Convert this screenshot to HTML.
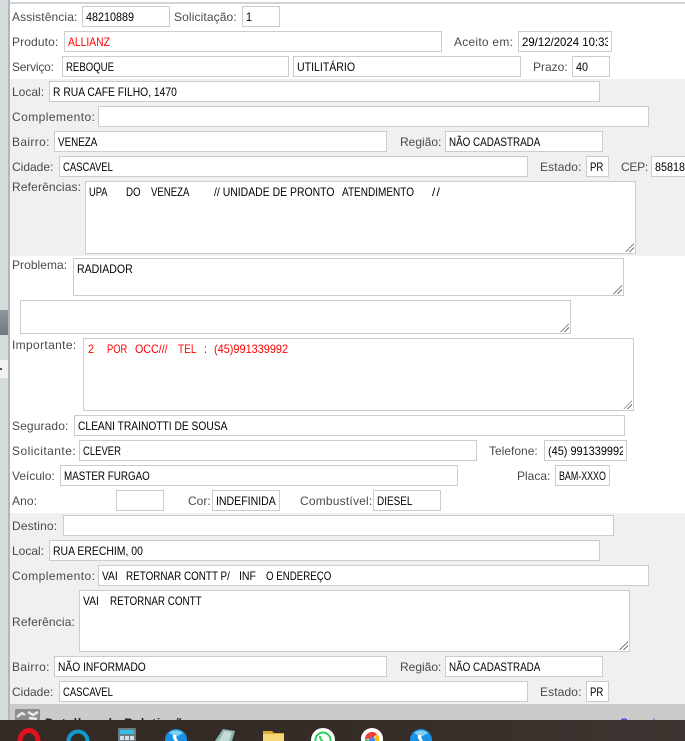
<!DOCTYPE html>
<html lang="pt-BR"><head><meta charset="utf-8"><title>Assistência</title>
<style>
html,body{margin:0;padding:0;width:685px;height:741px;overflow:hidden;background:#fff}
body{position:relative;font-family:"Liberation Sans",sans-serif}
.a{position:absolute}
.l{position:absolute;font-size:12px;line-height:14px;color:#4a4a4a;white-space:pre;letter-spacing:.12px}
.i{position:absolute;box-sizing:border-box;height:21px;border:1px solid #ccc;background:#fff;font-size:12px;line-height:21px;color:#000;padding-left:3px;white-space:pre;overflow:hidden}
.i b{font-weight:normal;display:inline-block;transform-origin:0 50%;transform:scaleX(var(--x,.85))}
.t{line-height:14px;padding-top:3px}
.t:after{content:"";position:absolute;right:1px;bottom:1px;width:9px;height:9px;background:linear-gradient(135deg,transparent 0 50%,#777 50% 58%,transparent 58% 72%,#777 72% 80%,transparent 80%)}
.c:after{content:"";position:absolute;right:0;top:0;bottom:0;width:3px;background:#fff}
.i .s{position:absolute}
.bar{position:absolute;left:0;top:0;width:8px;height:720px;background:#d6dcde}
</style></head><body>
<div class="bar"></div>
<div class="a" style="left:8px;top:0;width:2px;height:720px;background:#b4b6b7"></div>
<div class="a" style="left:0;top:310px;width:8px;height:25px;background:linear-gradient(#8f969b,#72787d)"></div>
<div class="a" style="left:0;top:360px;width:8px;height:18px;background:#f1f2f2"></div>
<div class="a" style="left:0;top:368px;width:2px;height:2px;background:#555"></div>
<div class="a" style="left:10px;top:2px;width:675px;height:2px;background:#cdd5da"></div>
<div class="a" style="left:10px;top:79px;width:675px;height:177px;background:#f0f0f0"></div>
<div class="a" style="left:10px;top:513px;width:675px;height:191px;background:#f0f0f0"></div>
<div class="a" style="left:10px;top:704px;width:675px;height:16px;background:#cbcbcb"></div>

<div class="l" style="left:12px;top:10px">Assistência:</div>
<div class="i" style="left:82px;top:6px;width:88px"><b style="--x:.9">48210889</b></div>
<div class="l" style="left:174px;top:10px">Solicitação:</div>
<div class="i" style="left:242px;top:6px;width:38px"><b style="--x:.9">1</b></div>

<div class="l" style="left:12px;top:35px">Produto:</div>
<div class="i" style="left:64px;top:31px;width:378px;color:#f00"><b style="--x:.86">ALLIANZ</b></div>
<div class="l" style="left:454px;top:35px;letter-spacing:.25px">Aceito em:</div>
<div class="i c" style="left:518px;top:31px;width:94px"><b style="--x:.95">29/12/2024 10:33</b></div>

<div class="l" style="left:12px;top:60px;letter-spacing:-.2px">Serviço:</div>
<div class="i" style="left:62px;top:56px;width:227px"><b style="--x:.8">REBOQUE</b></div>
<div class="i" style="left:293px;top:56px;width:228px"><b style="--x:.88">UTILITÁRIO</b></div>
<div class="l" style="left:533px;top:60px;letter-spacing:0">Prazo:</div>
<div class="i" style="left:572px;top:56px;width:38px"><b style="--x:.9">40</b></div>

<div class="l" style="left:12px;top:85px;letter-spacing:0">Local:</div>
<div class="i" style="left:49px;top:81px;width:551px"><b style="--x:.86">R RUA CAFE FILHO, 1470</b></div>
<div class="l" style="left:12px;top:110px;letter-spacing:.45px">Complemento:</div>
<div class="i" style="left:98px;top:106px;width:551px"></div>
<div class="l" style="left:12px;top:135px;letter-spacing:.35px">Bairro:</div>
<div class="i" style="left:54px;top:131px;width:333px"><b style="--x:.82">VENEZA</b></div>
<div class="l" style="left:400px;top:135px;letter-spacing:0">Região:</div>
<div class="i" style="left:445px;top:131px;width:158px"><b style="--x:.82">NÃO CADASTRADA</b></div>
<div class="l" style="left:12px;top:160px;letter-spacing:0">Cidade:</div>
<div class="i" style="left:59px;top:156px;width:469px"><b style="--x:.79">CASCAVEL</b></div>
<div class="l" style="left:540px;top:160px">Estado:</div>
<div class="i" style="left:586px;top:156px;width:23px"><b style="--x:.8">PR</b></div>
<div class="l" style="left:621px;top:160px;letter-spacing:-.25px">CEP:</div>
<div class="i" style="left:651px;top:156px;width:40px"><b style="--x:.9">85818</b></div>

<div class="l" style="left:12px;top:180px;letter-spacing:.15px">Referências:</div>
<div class="i t" style="left:85px;top:181px;width:551px;height:73px"><b class="s" style="left:3.3px;top:3px;--x:.78">UPA</b><b class="s" style="left:39.7px;top:3px;--x:.81">DO</b><b class="s" style="left:65px;top:3px;--x:.8">VENEZA</b><b class="s" style="left:128px;top:3px;--x:.87">// UNIDADE DE PRONTO</b><b class="s" style="left:256px;top:3px;--x:.835">ATENDIMENTO</b><b class="s" style="left:346px;top:3px;--x:1;letter-spacing:1.2px">//</b></div>

<div class="l" style="left:12px;top:258px;letter-spacing:.05px">Problema:</div>
<div class="i t" style="left:73px;top:258px;width:551px;height:38px"><b style="--x:.88">RADIADOR</b></div>
<div class="i t" style="left:20px;top:300px;width:551px;height:34px"></div>
<div class="l" style="left:12px;top:338px;letter-spacing:.35px">Importante:</div>
<div class="i t" style="left:83px;top:338px;width:551px;height:73px;color:#f00"><b class="s" style="left:3.7px;top:3px;--x:.9">2</b><b class="s" style="left:23px;top:3px;--x:.78">POR</b><b class="s" style="left:51px;top:3px;--x:.89">OCC///</b><b class="s" style="left:94.3px;top:3px;--x:.84">TEL</b><b class="s" style="left:120px;top:3px;--x:.9">:</b><b class="s" style="left:130.3px;top:3px;--x:.91">(45)991339992</b></div>

<div class="l" style="left:12px;top:419px">Segurado:</div>
<div class="i" style="left:74px;top:415px;width:551px"><b style="--x:.853">CLEANI TRAINOTTI DE SOUSA</b></div>
<div class="l" style="left:12px;top:444px;letter-spacing:.45px">Solicitante:</div>
<div class="i" style="left:79px;top:440px;width:398px"><b style="--x:.79">CLEVER</b></div>
<div class="l" style="left:489px;top:444px;letter-spacing:0">Telefone:</div>
<div class="i c" style="left:544px;top:440px;width:83px"><b style="--x:.91">(45) 991339992</b></div>
<div class="l" style="left:12px;top:469px;letter-spacing:0">Veículo:</div>
<div class="i" style="left:60px;top:465px;width:398px"><b style="--x:.82">MASTER FURGAO</b></div>
<div class="l" style="left:517px;top:469px;letter-spacing:0">Placa:</div>
<div class="i" style="left:555px;top:465px;width:55px"><b style="--x:.74">BAM-XXXO</b></div>
<div class="l" style="left:12px;top:494px">Ano:</div>
<div class="i" style="left:116px;top:490px;width:48px"></div>
<div class="l" style="left:188px;top:494px;letter-spacing:0">Cor:</div>
<div class="i" style="left:212px;top:490px;width:68px"><b style="--x:.88">INDEFINIDA</b></div>
<div class="l" style="left:300px;top:494px;letter-spacing:.2px">Combustível:</div>
<div class="i" style="left:373px;top:490px;width:68px"><b style="--x:.83">DIESEL</b></div>

<div class="l" style="left:12px;top:519px;letter-spacing:.15px">Destino:</div>
<div class="i" style="left:63px;top:515px;width:551px"></div>
<div class="l" style="left:12px;top:544px;letter-spacing:0">Local:</div>
<div class="i" style="left:49px;top:540px;width:551px"><b style="--x:.87">RUA ERECHIM, 00</b></div>
<div class="l" style="left:12px;top:569px;letter-spacing:.45px">Complemento:</div>
<div class="i" style="left:98px;top:565px;width:551px"><b style="--x:.85">VAI</b><b class="s" style="left:26.7px;top:0;--x:.823">RETORNAR CONTT P/</b><b class="s" style="left:139.7px;top:0;--x:.88">INF</b><b class="s" style="left:167.3px;top:0;--x:.81">O ENDEREÇO</b></div>
<div class="l" style="left:12px;top:615px;letter-spacing:.15px">Referência:</div>
<div class="i t" style="left:79px;top:590px;width:551px;height:62px"><b style="--x:.86">VAI</b><b class="s" style="left:30.3px;top:3px;--x:.82">RETORNAR CONTT</b></div>
<div class="l" style="left:12px;top:660px;letter-spacing:.35px">Bairro:</div>
<div class="i" style="left:54px;top:656px;width:333px"><b style="--x:.855">NÃO INFORMADO</b></div>
<div class="l" style="left:400px;top:660px;letter-spacing:0">Região:</div>
<div class="i" style="left:445px;top:656px;width:158px"><b style="--x:.82">NÃO CADASTRADA</b></div>
<div class="l" style="left:12px;top:685px;letter-spacing:0">Cidade:</div>
<div class="i" style="left:59px;top:681px;width:469px"><b style="--x:.79">CASCAVEL</b></div>
<div class="l" style="left:540px;top:685px">Estado:</div>
<div class="i" style="left:586px;top:681px;width:23px"><b style="--x:.8">PR</b></div>

<svg class="a" style="left:15px;top:709px" width="26" height="12" viewBox="0 0 26 12"><rect width="25" height="12" rx="2" fill="#8d8d8d"/><path d="M2 8l5-4 3 2M13 3l5 3 5-3M14 9l8 1" stroke="#e8e8e8" stroke-width="2.5" fill="none"/></svg>
<div class="a" style="left:45px;top:715.5px;font-size:12px;font-weight:bold;line-height:14px;color:#222;white-space:pre;letter-spacing:.7px">Detalhes de Relatiação</div>
<div class="a" style="left:620px;top:716px;font-size:12px;line-height:14px;color:#00f;white-space:pre;letter-spacing:2px">Serviços</div>

<div class="a" style="left:0;top:720px;width:685px;height:21px;background:linear-gradient(90deg,#332a24,#352c27 50%,#3e3431)"></div>
<svg class="a" style="left:0;top:720px" width="685" height="21" viewBox="0 0 685 21">
<ellipse cx="29" cy="21" rx="9" ry="10.5" fill="none" stroke="#e3101f" stroke-width="5"/>
<circle cx="78" cy="21" r="9.5" fill="none" stroke="#0f9bd0" stroke-width="4"/>
<rect x="118" y="8" width="18" height="14" rx="1.5" fill="#6d7b86"/><rect x="120" y="10" width="14" height="4" fill="#35c0ea"/><rect x="120" y="16" width="4" height="4" fill="#d5dde3"/><rect x="125" y="16" width="4" height="4" fill="#d5dde3"/><rect x="130" y="16" width="4" height="4" fill="#d5dde3"/>
<circle cx="176" cy="20" r="11" fill="#1b93e4"/><path d="M169 13a11 11 0 0 1 14 0l-7 4z" fill="#7fd0f5"/><path d="M173 15q-1 3 2 6h3q-2-3-2-6z" fill="#fff"/>
<path d="M223 9l12 2-3 10h-17z" fill="#8db5ad"/><path d="M224 11l8 1-3 9h-10z" fill="#c3dcd6"/>
<path d="M263 13v-2h9l2 2h10v8h-21z" fill="#e0a92f"/><rect x="263" y="14" width="21" height="7" fill="#f6d777"/>
<circle cx="323" cy="20" r="12" fill="#fff"/><circle cx="323" cy="20" r="7.5" fill="none" stroke="#2bd15f" stroke-width="2"/><path d="M320 16q0 5 6 7" stroke="#2bd15f" stroke-width="2" fill="none"/>
<circle cx="372" cy="19" r="11" fill="#fff"/><path d="M372 19m-7 0a7 7 0 0 1 12-5l-5 5z" fill="#ea4335"/><path d="M377 14a7 7 0 0 1 2 7v1h-7z" fill="#fbbc04"/><path d="M365 19a7 7 0 0 0 7 7l7-5h-7z" fill="#34a853"/><circle cx="372" cy="20" r="3" fill="#4285f4"/>
<circle cx="421" cy="20" r="11" fill="#1b93e4"/><path d="M414 13a11 11 0 0 1 14 0l-7 4z" fill="#7fd0f5"/><path d="M418 15q-1 3 2 6h3q-2-3-2-6z" fill="#fff"/>
</svg>
</body></html>
